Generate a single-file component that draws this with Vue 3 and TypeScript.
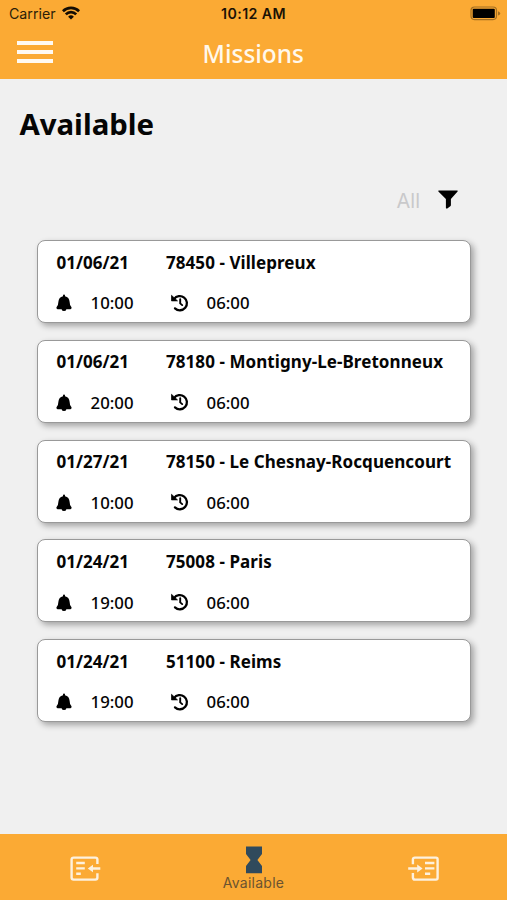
<script setup lang="ts">
interface Mission {
  date: string
  place: string
  start: string
  duration: string
}

const missions: Mission[] = [
  { date: '01/06/21', place: '78450 - Villepreux', start: '10:00', duration: '06:00' },
  { date: '01/06/21', place: '78180 - Montigny-Le-Bretonneux', start: '20:00', duration: '06:00' },
  { date: '01/27/21', place: '78150 - Le Chesnay-Rocquencourt', start: '10:00', duration: '06:00' },
  { date: '01/24/21', place: '75008 - Paris', start: '19:00', duration: '06:00' },
  { date: '01/24/21', place: '51100 - Reims', start: '19:00', duration: '06:00' },
]
</script>

<template>
  <div class="screen">
    <header class="top">
      <div class="status">
        <div class="carrier">
          <span>Carrier</span>
          <svg class="wifi" width="18" height="14" viewBox="0 0 18 14">
            <path d="M.9 5.2a11.4 11.4 0 0 1 16.2 0M3.8 8.4a7.3 7.3 0 0 1 10.4 0" fill="none" stroke="#140d03" stroke-width="2.7" />
            <path d="M9 13.6 6.1 10.7a4.1 4.1 0 0 1 5.8 0z" fill="#140d03" />
          </svg>
        </div>
        <div class="clock">10:12 AM</div>
        <svg class="battery" width="31" height="15" viewBox="0 0 31 15">
          <rect x="1" y="1" width="25.5" height="12.6" rx="3.5" fill="none" stroke="#a36f22" stroke-width="1.2" />
          <rect x="2.7" y="2.7" width="22.1" height="9.2" rx="1" fill="#000" />
          <path d="M28 5.2q2.2 1 2.2 2.2T28 9.6z" fill="#a36f22" />
        </svg>
      </div>
      <div class="navbar">
        <button class="menu" aria-label="Menu"><i></i><i></i><i></i></button>
        <div class="title">Missions</div>
      </div>
    </header>

    <main class="content">
      <h1>Available</h1>
      <div class="filter">
        <span>All</span>
        <svg width="20" height="19" viewBox="0 0 20 19">
          <path d="M.6.5h18.8q.6.5.2 1.1L12.9 8.9v6.2q0 .7-.6 1.1l-3 2.2q-1.4.5-1.4-.7V8.9L.4 1.6Q0 .9.6.5z" fill="#000" />
        </svg>
      </div>
      <div class="list">
        <article v-for="(m, i) in missions" :key="i" class="card">
          <div class="row main">
            <span class="date">{{ m.date }}</span>
            <span class="place">{{ m.place }}</span>
          </div>
          <div class="row times">
            <svg class="bell" width="16" height="18" viewBox="0 0 16 18">
              <path d="M8 .6q1 0 1 1v.6q4.200.8 4.600 5.600.1 3.400 1.600 5 .6.7.3 1.500-.3.900-1.300.9H10.400q-.4 1.900-2.400 1.900t-2.400-1.900H1.800q-1 0-1.300-.9-.3-.8.3-1.500 1.500-1.600 1.600-5Q2.800 3 7 2.200v-.6q0-1 1-1z" />
            </svg>
            <span class="start">{{ m.start }}</span>
            <svg class="history" width="18" height="18" viewBox="0 0 18 18">
              <path d="M3 5.1A7.1 7.1 0 1 1 4 14.400" fill="none" stroke="#000" stroke-width="2.3" stroke-linecap="round" />
              <path d="M.5 1.300.5 6.900h6z" fill="#000" stroke="#000" stroke-width=".7" stroke-linejoin="round" />
              <path d="M9.200 5.300v4.100l2 1.700" fill="none" stroke="#000" stroke-width="1.900" stroke-linecap="round" />
            </svg>
            <span>{{ m.duration }}</span>
          </div>
        </article>
      </div>
    </main>

    <nav class="tabs">
      <a class="tab first">
        <svg width="31" height="26" viewBox="0 0 31 26">
          <g fill="none" stroke="#fdf1de" stroke-width="2.4">
            <path d="M27.4 8V3.6Q27.4 1.6 25.4 1.6H3.6Q1.6 1.6 1.6 3.6V21.6Q1.6 23.6 3.6 23.6H25.4Q27.4 23.6 27.4 21.6V17.200" />
            <path d="M6.200 7h8.600M6.200 12.400h8.600M6.200 17.800h4.600M21 12.500h9.300" />
          </g>
          <path d="M17.800 12.500 23 8.700v7.600z" fill="#fdf1de" />
        </svg>
      </a>
      <a class="tab active">
        <svg width="18" height="28" viewBox="0 0 18 28">
          <path d="M1 .5H17V8L12.400 14 17 20V27.300H1V20L5.600 14 1 8z" fill="#304a5c" />
        </svg>
        <span>Available</span>
      </a>
      <a class="tab last">
        <svg width="31" height="26" viewBox="0 0 31 26">
          <g fill="none" stroke="#fdf1de" stroke-width="2.4">
            <path d="M4.900 8.200V3.600Q4.900 1.600 6.900 1.600H28Q29.600 1.600 29.600 3.200V22Q29.600 23.600 28 23.600H6.900Q4.900 23.600 4.900 21.600V17" />
            <path d="M17 7h9.400M17 12.400h9.400M17 17.800h5.200M.2 12.500H10" />
          </g>
          <path d="M14.600 12.500 9.200 8.500v8z" fill="#fdf1de" />
        </svg>
      </a>
    </nav>
  </div>
</template>

<style>
body {
  margin: 0;
}
</style>

<style scoped>
.screen {
  width: 507px;
  height: 900px;
  display: flex;
  flex-direction: column;
  overflow: hidden;
  background: #f0f0f0;
  color: #050505;
  font-family: "Noto Sans", "Open Sans", sans-serif;
}
.top {
  height: 79px;
  flex: none;
  background: #fbaa34;
}
.status {
  height: 27px;
  display: grid;
  grid-template-columns: 1fr auto 1fr;
  align-items: center;
  box-sizing: border-box;
  padding: 0 6px 0 9px;
  font-family: Inter, sans-serif;
  font-size: 14.2px;
  color: #2b1d08;
}
.carrier {
  display: flex;
  align-items: center;
  gap: 6px;
}
.wifi {
  margin-top: -2px;
}
.clock {
  font-weight: 600;
  letter-spacing: 0.4px;
  margin-left: -3px;
  color: #1b1205;
}
.battery {
  justify-self: end;
}
.navbar {
  height: 52px;
  display: grid;
  grid-template-columns: 1fr auto 1fr;
  align-items: center;
  padding: 0 17px 0 16.5px;
}
.menu {
  width: 36px;
  padding: 0;
  border: 0;
  background: none;
  display: flex;
  flex-direction: column;
  gap: 5px;
  margin-top: -3px;
}
.menu i {
  height: 4px;
  background: #fffaf2;
}
.title {
  font-size: 24.4px;
  font-weight: 500;
  line-height: 53px;
  color: #fff8ec;
}
.content {
  flex: 1;
}
h1 {
  margin: 25px 0 0 19.4px;
  font-size: 29.4px;
  line-height: 40px;
  font-weight: 700;
}
.filter {
  display: flex;
  justify-content: flex-end;
  align-items: center;
  gap: 18px;
  height: 24px;
  margin-top: 44px;
  padding-right: 49px;
  font-family: Inter, sans-serif;
  font-size: 20px;
  color: #c9c9cb;
}
.filter span {
  padding-top: 2px;
}
.filter svg {
  margin-top: -2px;
}
.list {
  display: flex;
  flex-direction: column;
  gap: 16.8px;
  margin: 28px 36px 0 37px;
}
.card {
  height: 83px;
  box-sizing: border-box;
  border: 1px solid #999;
  border-radius: 8px;
  background: #fff;
  padding: 9.200px 0 0 18.6px;
  box-shadow: 3px 3px 6px rgba(0, 0, 0, 0.32);
}
.row {
  display: flex;
  align-items: center;
  height: 24px;
  white-space: nowrap;
  font-size: 16.8px;
}
.main {
  font-size: 17px;
  font-weight: 700;
}
.date {
  width: 109.4px;
}
.place {
  letter-spacing: 0.07px;
}
.times {
  margin-top: 16.5px;
  font-weight: 500;
}
.bell {
  margin: 1px 19px 0 -1px;
}
.start {
  width: 80px;
}
.history {
  margin: 0 18px 0 0;
}
.tabs {
  height: 66px;
  flex: none;
  display: grid;
  grid-template-columns: repeat(3, 1fr);
  background: #fbaa34;
}
.tab {
  display: flex;
  flex-direction: column;
  align-items: center;
  justify-content: center;
  padding-top: 3px;
}
.first {
  padding-left: 2px;
}
.last {
  padding-left: 1px;
}
.active {
  justify-content: flex-start;
  padding-top: 12px;
  font-family: Inter, sans-serif;
  font-size: 14px;
  line-height: 17px;
  letter-spacing: 0.25px;
  color: #6b5330;
}
</style>
